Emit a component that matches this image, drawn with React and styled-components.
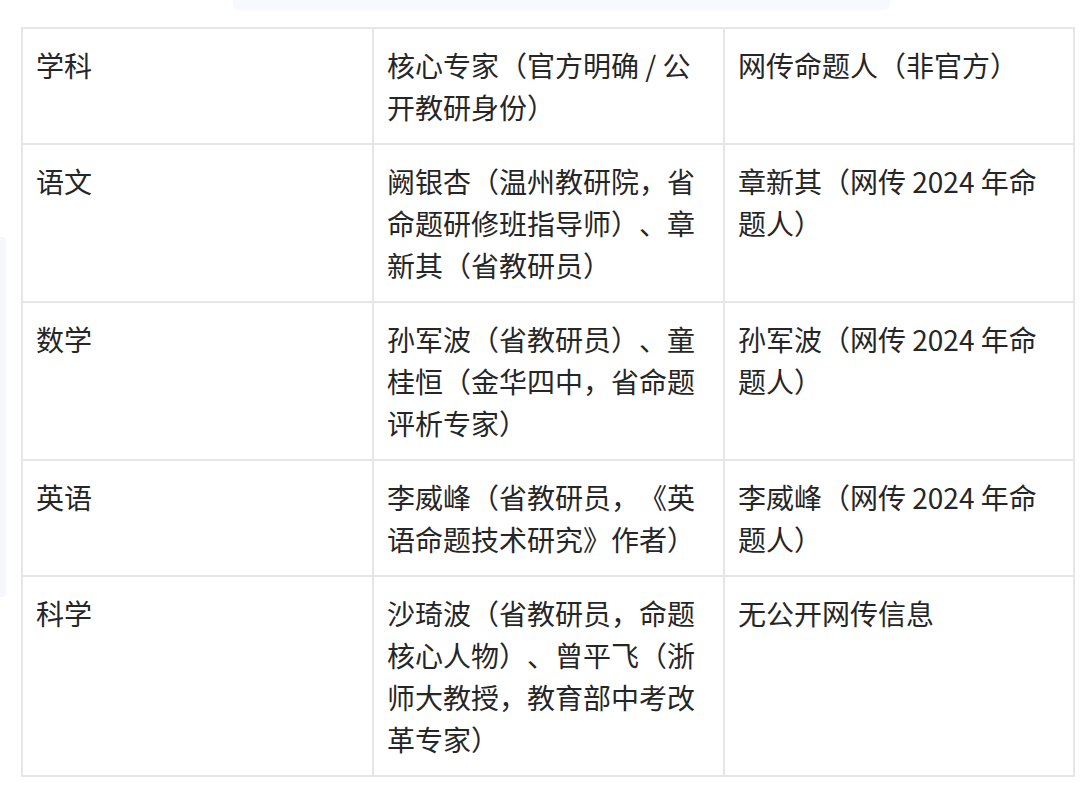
import React from 'react';
import styled, { createGlobalStyle } from 'styled-components';

const GlobalStyle = createGlobalStyle`
  html, body {
    margin: 0;
    padding: 0;
    background: #ffffff;
  }
  body {
    font-family: "Noto Sans CJK SC", "Noto Sans", sans-serif;
    color: #262626;
  }
`;

const Page = styled.div`
  width: 1080px;
  height: 786px;
  overflow: hidden;
`;

const TopFade = styled.div`
  margin-left: 233px;
  width: 657px;
  height: 10px;
  background: #f6f9fd;
  border-radius: 0 0 6px 6px;
`;

const Body = styled.div`
  display: flex;
  align-items: flex-start;
  margin-top: 17px;
`;

const SideFade = styled.div`
  flex: none;
  width: 6px;
  height: 360px;
  margin-top: 210px;
  background: #f4f8fd;
  border-radius: 0 4px 4px 0;
`;

const Table = styled.table`
  margin-left: 15px;
  width: 1052px;
  border-collapse: collapse;
  table-layout: fixed;
  font-size: 28px;
  line-height: 42px;
  text-spacing-trim: space-all;
`;

const Cell = styled.td`
  border: 2px solid #e6e6e6;
  padding: 15px 16px 15px 13px;
  vertical-align: top;
  text-align: left;
  font-weight: 400;
  word-break: break-all;
`;

const rows = [
  ['学科', '核心专家（官方明确 / 公开教研身份）', '网传命题人（非官方）'],
  ['语文', '阙银杏（温州教研院，省命题研修班指导师）、章新其（省教研员）', '章新其（网传 2024 年命题人）'],
  ['数学', '孙军波（省教研员）、童桂恒（金华四中，省命题评析专家）', '孙军波（网传 2024 年命题人）'],
  ['英语', '李威峰（省教研员，《英语命题技术研究》作者）', '李威峰（网传 2024 年命题人）'],
  ['科学', '沙琦波（省教研员，命题核心人物）、曾平飞（浙师大教授，教育部中考改革专家）', '无公开网传信息'],
];

export default function App() {
  return (
    <Page>
      <GlobalStyle />
      <TopFade />
      <Body>
        <SideFade />
        <Table>
          <colgroup>
            <col style={{ width: '351px' }} />
            <col style={{ width: '351px' }} />
            <col style={{ width: '350px' }} />
          </colgroup>
          <tbody>
            {rows.map((r, i) => (
              <tr key={i}>
                {r.map((c, j) => (
                  <Cell key={j}>{c}</Cell>
                ))}
              </tr>
            ))}
          </tbody>
        </Table>
      </Body>
    </Page>
  );
}
